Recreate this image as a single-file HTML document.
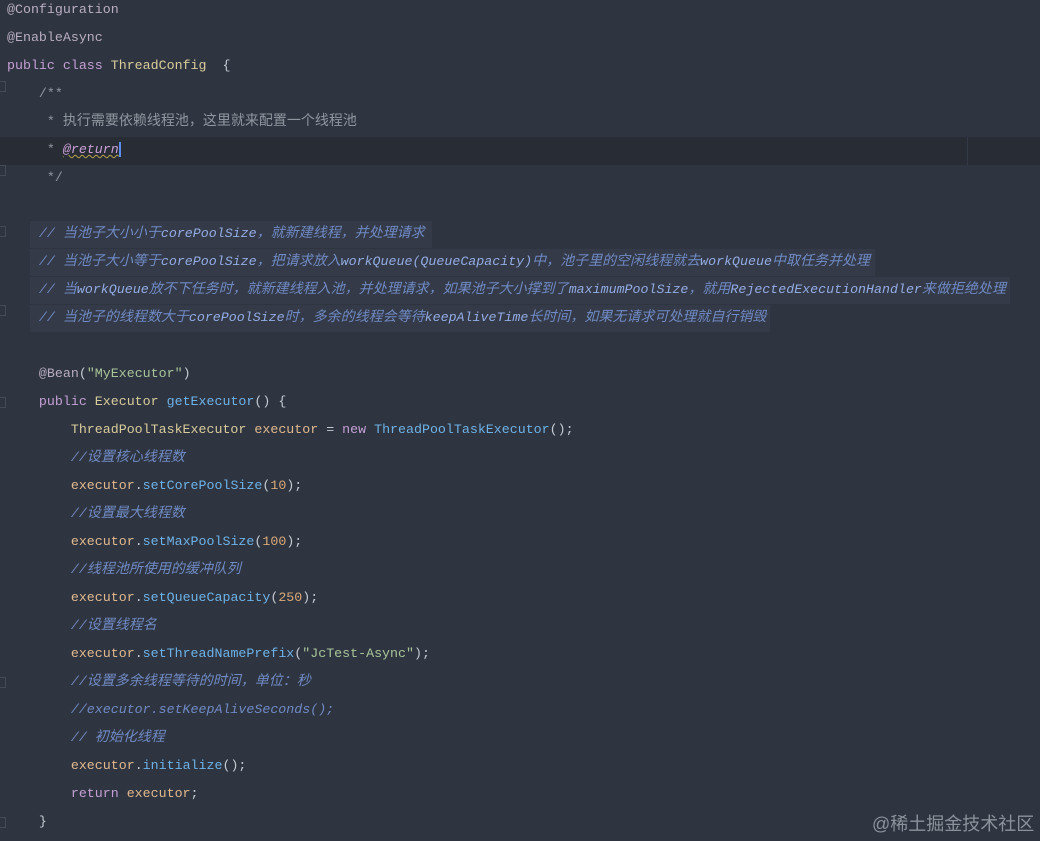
<!DOCTYPE html>
<html><head><meta charset="utf-8"><style>
html,body{margin:0;padding:0;}
body{width:1040px;height:841px;background:#2f3540;overflow:hidden;position:relative;font-family:"Liberation Mono","Noto Sans CJK SC",monospace;font-size:13.3px;color:#c5cad3;}
.l{position:absolute;left:7px;height:28px;line-height:28px;white-space:pre;}
.cur{position:absolute;left:0;top:137px;width:1040px;height:28px;background:#282c34;}
.mg{position:absolute;left:967px;top:137px;width:1px;height:28px;background:#343a45;}
.cb{position:absolute;background:#343a47;height:27px;}
.an{color:#b8adc2}.kw{color:#c49fd6}.cl{color:#d9cc9c}.fn{color:#6db2e8}.v{color:#e0b88e}
.n{color:#d8a878}.s{color:#a8c49a}.dc{color:#8f96a0}.tg{color:#c9a0d8;font-style:italic;text-decoration:underline wavy #b5a34c;text-decoration-thickness:1px}
.c{color:#6f8ac4;font-style:italic}.cw{color:#93acE4;font-style:italic}
.z{font-size:14px}
.wm{position:absolute;left:872px;top:810px;font-family:"Liberation Sans","Noto Sans CJK SC",sans-serif;font-size:18px;color:#8c929c;}
.g{position:absolute;left:0;width:5px;height:9px;border:1px solid #454b56;border-left:none;}
</style></head><body>
<div class="cur"></div>
<div class="mg"></div>
<div class="cb" style="left:30px;top:221px;width:402px"></div>
<div class="cb" style="left:30px;top:249px;width:845px"></div>
<div class="cb" style="left:30px;top:277px;width:980px"></div>
<div class="cb" style="left:30px;top:305px;width:740px"></div>
<div class="g" style="top:81px"></div><div class="g" style="top:165px"></div><div class="g" style="top:226px"></div><div class="g" style="top:305px"></div><div class="g" style="top:397px"></div><div class="g" style="top:677px"></div><div class="g" style="top:817px"></div>
<div class="l" style="top:-4px"><span class="an">@Configuration</span></div>
<div class="l" style="top:24px"><span class="an">@EnableAsync</span></div>
<div class="l" style="top:52px"><span class="kw">public class </span><span class="cl">ThreadConfig</span>  {</div>
<div class="l dc" style="top:80px">    /**</div>
<div class="l dc" style="top:108px">     * <span class="z">执行需要依赖线程池，这里就来配置一个线程池</span></div>
<div class="l dc" style="top:136px">     * <span class="tg">@return</span><span style="border-left:2px solid #5a8ff0"></span></div>
<div class="l dc" style="top:164px">     */</div>
<div class="l c" style="top:220px">    // <span class="z">当池子大小小于</span><span class="cw">corePoolSize</span><span class="z">，就新建线程，并处理请求</span></div>
<div class="l c" style="top:248px">    // <span class="z">当池子大小等于</span><span class="cw">corePoolSize</span><span class="z">，把请求放入</span><span class="cw">workQueue(QueueCapacity)</span><span class="z">中，池子里的空闲线程就去</span><span class="cw">workQueue</span><span class="z">中取任务并处理</span></div>
<div class="l c" style="top:276px">    // <span class="z">当</span><span class="cw">workQueue</span><span class="z">放不下任务时，就新建线程入池，并处理请求，如果池子大小撑到了</span><span class="cw">maximumPoolSize</span><span class="z">，就用</span><span class="cw">RejectedExecutionHandler</span><span class="z">来做拒绝处理</span></div>
<div class="l c" style="top:304px">    // <span class="z">当池子的线程数大于</span><span class="cw">corePoolSize</span><span class="z">时，多余的线程会等待</span><span class="cw">keepAliveTime</span><span class="z">长时间，如果无请求可处理就自行销毁</span></div>
<div class="l" style="top:360px">    <span class="an">@Bean</span>(<span class="s">"MyExecutor"</span>)</div>
<div class="l" style="top:388px">    <span class="kw">public </span><span class="cl">Executor </span><span class="fn">getExecutor</span>() {</div>
<div class="l" style="top:416px">        <span class="cl">ThreadPoolTaskExecutor </span><span class="v">executor</span> = <span class="kw">new </span><span class="fn">ThreadPoolTaskExecutor</span>();</div>
<div class="l c" style="top:444px">        //<span class="z">设置核心线程数</span></div>
<div class="l" style="top:472px">        <span class="v">executor</span>.<span class="fn">setCorePoolSize</span>(<span class="n">10</span>);</div>
<div class="l c" style="top:500px">        //<span class="z">设置最大线程数</span></div>
<div class="l" style="top:528px">        <span class="v">executor</span>.<span class="fn">setMaxPoolSize</span>(<span class="n">100</span>);</div>
<div class="l c" style="top:556px">        //<span class="z">线程池所使用的缓冲队列</span></div>
<div class="l" style="top:584px">        <span class="v">executor</span>.<span class="fn">setQueueCapacity</span>(<span class="n">250</span>);</div>
<div class="l c" style="top:612px">        //<span class="z">设置线程名</span></div>
<div class="l" style="top:640px">        <span class="v">executor</span>.<span class="fn">setThreadNamePrefix</span>(<span class="s">"JcTest-Async"</span>);</div>
<div class="l c" style="top:668px">        //<span class="z">设置多余线程等待的时间，单位：秒</span></div>
<div class="l c" style="top:696px">        //executor.setKeepAliveSeconds();</div>
<div class="l c" style="top:724px">        // <span class="z">初始化线程</span></div>
<div class="l" style="top:752px">        <span class="v">executor</span>.<span class="fn">initialize</span>();</div>
<div class="l" style="top:780px">        <span class="kw">return </span><span class="v">executor</span>;</div>
<div class="l" style="top:808px">    }</div>
<div class="wm">@稀土掘金技术社区</div>
</body></html>
